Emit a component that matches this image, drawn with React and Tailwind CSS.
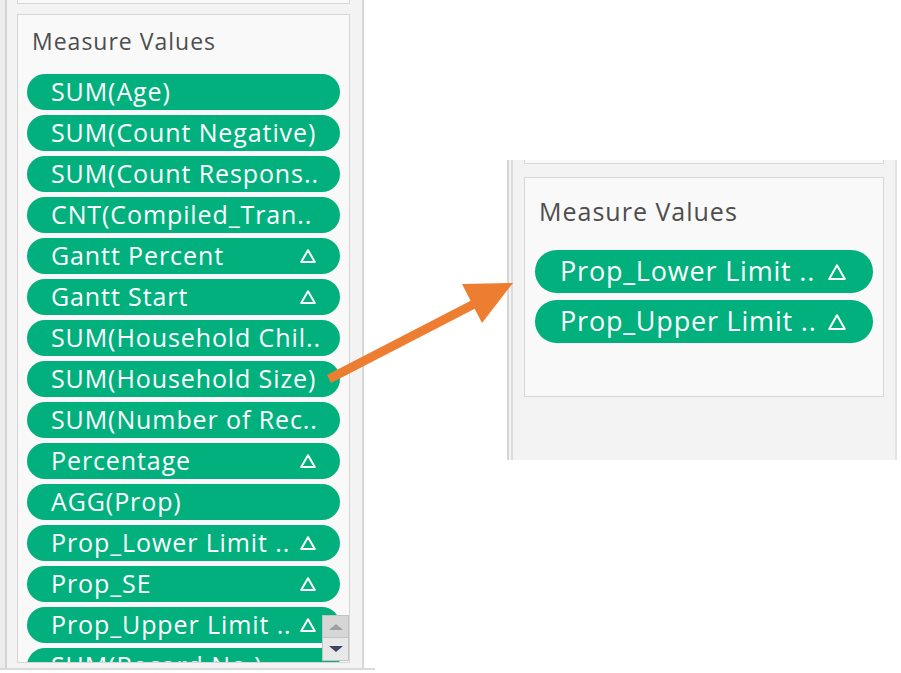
const leftItems = [
  { label: 'SUM(Age)' },
  { label: 'SUM(Count Negative)' },
  { label: 'SUM(Count Respons..' },
  { label: 'CNT(Compiled_Tran..' },
  { label: 'Gantt Percent', calc: true },
  { label: 'Gantt Start', calc: true },
  { label: 'SUM(Household Chil..' },
  { label: 'SUM(Household Size)' },
  { label: 'SUM(Number of Rec..' },
  { label: 'Percentage', calc: true },
  { label: 'AGG(Prop)' },
  { label: 'Prop_Lower Limit ..', calc: true },
  { label: 'Prop_SE', calc: true },
  { label: 'Prop_Upper Limit ..', calc: true },
  { label: 'SUM(Record No.)' },
];

const rightItems = [
  { label: 'Prop_Lower Limit ..', calc: true },
  { label: 'Prop_Upper Limit ..', calc: true },
];

function Delta({ big }) {
  const w = big ? 18 : 16;
  const h = big ? 16 : 14;
  return (
    <svg width={w} height={h} viewBox={`0 0 ${w} ${h}`} className="shrink-0">
      <polygon points={`${w / 2},1.2 ${w - 1.2},${h - 1} 1.2,${h - 1}`} fill="none" stroke="white" strokeWidth="2" strokeLinejoin="round" />
    </svg>
  );
}

function Pill({ item, big }) {
  return (
    <div
      className={`flex shrink-0 items-center justify-between rounded-full bg-[#02b07d] text-white whitespace-nowrap ${
        big
          ? 'h-[43px] pl-[25px] pr-[27px] text-[27px] tracking-[0.8px]'
          : 'h-[36px] pl-[24px] pr-[24px] text-[25px] tracking-[0.9px]'
      }`}
    >
      <span>{item.label}</span>
      {item.calc && <Delta big={big} />}
    </div>
  );
}

export default function App() {
  return (
    <div className="relative w-[901px] h-[673px] bg-white overflow-hidden font-['Open_Sans',sans-serif] flex items-start">
      {/* left shelf */}
      <div className="flex h-[670px] w-[375px] shrink-0 border-b-2 border-[#dadada]">
        <div className="w-[5px] bg-[#ececec]" />
        <div className="w-[2px] bg-[#d3d3d3]" />
        <div className="w-[355px] bg-[#f3f3f3] pl-[10px] pr-[12px] flex flex-col">
          <div className="h-[4px] border-x border-b border-[#d6d6d6] bg-[#f9f9f9]" />
          <div className="relative mt-[10px] h-[649px] border border-[#d6d6d6] bg-[#f9f9f9] overflow-hidden px-[9px]">
            <div className="pl-[5px] pt-[9px] h-[59px] text-[23px] text-[#4d4d4d] tracking-[1px]">Measure Values</div>
            <div className="flex flex-col gap-[5px]">
              {leftItems.map((item, i) => (
                <Pill key={i} item={item} />
              ))}
            </div>
            {/* scroll buttons */}
            <div className="absolute left-[304px] top-[600px] w-[27px] flex flex-col">
              <div className="h-[23px] bg-[#d6d6d6] border border-[#c2c2c2] flex items-center justify-center">
                <div className="w-0 h-0 border-x-[7px] border-x-transparent border-b-[6px] border-b-[#9e9e9e]" />
              </div>
              <div className="h-[23px] bg-[#e8e8e8] border border-t-0 border-[#c2c2c2] flex items-center justify-center">
                <div className="w-0 h-0 border-x-[7px] border-x-transparent border-t-[6px] border-t-[#3f4461]" />
              </div>
            </div>
          </div>
        </div>
        <div className="w-[2px] bg-[#d8d8d8]" />
        <div className="flex-1 bg-white" />
      </div>

      {/* right shelf */}
      <div className="ml-[132px] mt-[160px] flex h-[300px] w-[390px] shrink-0">
        <div className="w-[2px] bg-[#d6d6d6]" />
        <div className="w-[2px] bg-[#f3f3f3]" />
        <div className="w-[2px] bg-[#dcdcdc]" />
        <div className="w-[382px] bg-[#f3f3f3] pl-[11px] pr-[11px] flex flex-col">
          <div className="h-[4px] border-x border-b border-[#d6d6d6] bg-[#f9f9f9]" />
          <div className="mt-[13px] h-[220px] border border-[#d6d6d6] bg-[#f9f9f9] px-[10px]">
            <div className="pl-[4px] pt-[15px] h-[72px] text-[25px] text-[#4d4d4d] tracking-[1px]">Measure Values</div>
            <div className="flex flex-col gap-[7px]">
              {rightItems.map((item, i) => (
                <Pill key={i} item={item} big />
              ))}
            </div>
          </div>
        </div>
        <div className="w-[2px] bg-[#e2e2e2]" />
      </div>

      {/* arrow overlay */}
      <svg className="absolute inset-0 pointer-events-none" width="901" height="673" viewBox="0 0 901 673">
        <line x1="329" y1="379" x2="478" y2="302" stroke="#ed7d31" strokeWidth="9" />
        <polygon points="513,283 462,284 482,323" fill="#ed7d31" />
      </svg>
    </div>
  );
}
